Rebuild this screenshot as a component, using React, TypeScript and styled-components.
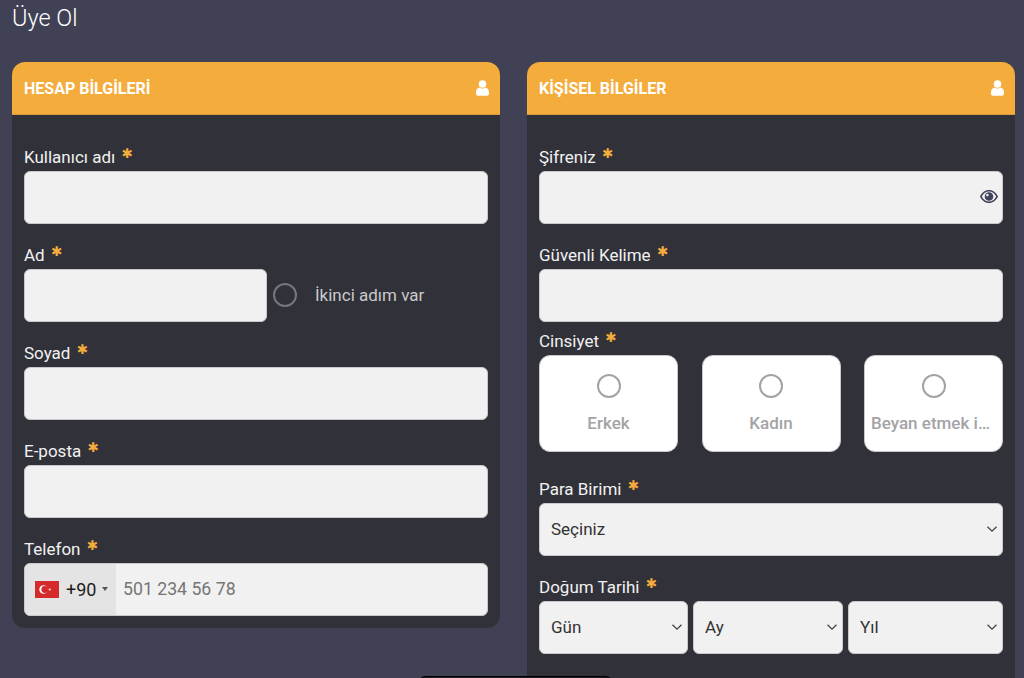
import React from "react";
import styled, { createGlobalStyle } from "styled-components";

const Global = createGlobalStyle`
  html, body { margin: 0; padding: 0; height: 100%; overflow: hidden; background: #404155; }
  * { box-sizing: border-box; }
  body { font-family: Roboto, "Liberation Sans", sans-serif; }
`;

const Page = styled.div`
  width: 1024px;
  height: 678px;
  overflow: hidden;
  position: relative;
  padding: 0 9px 0 12px;
  background: #404155;
`;
const Title = styled.h1`
  margin: 0;
  height: 62px;
  padding-top: 4px;
  font-size: 23.5px;
  line-height: 28px;
  font-weight: 300;
  color: #fff;
`;
const Columns = styled.div`
  display: grid;
  grid-template-columns: 488px 488px;
  column-gap: 27px;
  align-items: start;
`;
const Card = styled.section`
  background: #313139;
  border-radius: 13px;
  overflow: hidden;
`;
const CardHeader = styled.header`
  height: 53px;
  background: #f4ac3c;
  border-bottom: 1px solid #d99a38;
  padding: 0 11px 0 12px;
  display: flex;
  align-items: center;
  justify-content: space-between;
  color: #fff;
  font-size: 16px;
  font-weight: 700;
`;
const CardBody = styled.div<{ $bottom: number }>`
  padding: 30px 12px ${(p) => p.$bottom}px;
`;
const Field = styled.div<{ $gap?: number }>`
  margin-bottom: ${(p) => p.$gap ?? 19}px;
  &:last-child { margin-bottom: 0; }
`;
const Label = styled.label`
  display: block;
  height: 24px;
  margin-bottom: 2px;
  font-size: 17px;
  line-height: 24px;
  color: #f1f1f1;
`;
const Star = styled.span`
  color: #f4ac3c;
  font-size: 13.5px;
  line-height: 12px;
  margin-left: 6px;
  font-family: "DejaVu Sans", sans-serif;
  position: relative;
  top: -5px;
`;
const inputBox = `
  height: 53px;
  background: #f1f1f1;
  border: 1px solid #c9c9cd;
  border-radius: 6px;
`;
const Input = styled.input`
  ${inputBox}
  display: block;
  width: 100%;
  outline: none;
`;
const Row = styled.div`
  display: flex;
  align-items: center;
`;
const ShortInput = styled(Input)`
  width: 243px;
`;
const Check = styled.div`
  display: flex;
  align-items: center;
  margin-left: 6px;
  padding-bottom: 2px;
  font-size: 17px;
  color: #c9c9cb;
`;
const Circle = styled.span<{ $size: number; $color: string }>`
  display: block;
  width: ${(p) => p.$size}px;
  height: ${(p) => p.$size}px;
  border-radius: 50%;
  border: 2.5px solid ${(p) => p.$color};
  flex: none;
`;
const CheckText = styled.span`
  margin-left: 18px;
`;
const Wrap = styled.div`
  position: relative;
`;
const EyeButton = styled.span`
  position: absolute;
  right: 5px;
  top: 19px;
  display: flex;
  color: #40415a;
`;
const Phone = styled.div`
  ${inputBox}
  display: flex;
  overflow: hidden;
`;
const Dial = styled.div`
  width: 91px;
  background: #e4e4e4;
  display: flex;
  align-items: center;
  padding: 0 0 1px 10px;
  font-size: 18px;
  color: #1c1c1c;
`;
const Code = styled.span`
  margin-left: 7px;
`;
const Caret = styled.span`
  margin-left: 6px;
  width: 0;
  height: 0;
  border-left: 3.5px solid transparent;
  border-right: 3.5px solid transparent;
  border-top: 4px solid #555;
`;
const PhoneInput = styled.input`
  flex: 1;
  min-width: 0;
  border: 0;
  background: transparent;
  outline: none;
  padding: 0 7px 2px;
  font: 17.7px Roboto, sans-serif;
  color: #333;
  &::placeholder { color: #757575; opacity: 1; }
`;
const GenderGrid = styled.div`
  display: grid;
  grid-template-columns: repeat(3, 139px);
  justify-content: space-between;
`;
const GenderCard = styled.div`
  height: 97px;
  background: #fff;
  border: 1px solid #c9c9cd;
  border-radius: 11px;
  display: flex;
  flex-direction: column;
  align-items: center;
  padding: 18px 6px 0;
  min-width: 0;
`;
const GenderText = styled.div`
  margin-top: 14px;
  width: 100%;
  text-align: center;
  font-size: 17px;
  line-height: 22px;
  font-weight: 500;
  color: #a3a3a6;
  white-space: nowrap;
  overflow: hidden;
  text-overflow: ellipsis;
`;
const SelectBox = styled.div`
  ${inputBox}
  display: flex;
  align-items: center;
  justify-content: space-between;
  padding: 0 4px 2px 11px;
  font-size: 17px;
  color: #333;
  min-width: 0;
`;
const DateGrid = styled.div`
  display: grid;
  grid-template-columns: 149px 150px 1fr;
  column-gap: 5px;
`;
const Overlay = styled.div`
  position: absolute;
  left: 419px;
  top: 676px;
  width: 193px;
  height: 20px;
  background: #1c1c22;
  border: 1px solid #000;
  border-radius: 6px 6px 0 0;
`;

const UserIcon = () => (
  <svg width="13" height="16" viewBox="0 0 13 16" fill="#fff">
    <circle cx="6.5" cy="4" r="3.8" />
    <path d="M3.4 7.6C1.2 8.3 0 10 0 12.4v1.4C0 15 .9 15.8 2 15.8h9c1.100 0 2-.8 2-2v-1.400c0-2.400-1.200-4.100-3.400-4.800-.9.6-2 1-3.100 1s-2.200-.4-3.100-1z" />
  </svg>
);
const EyeIcon = () => (
  <svg width="18" height="13" viewBox="0 0 18 13" fill="currentColor">
    <path fillRule="evenodd" d="M9 0C5 0 1.900 2.500 0 6.500 1.900 10.500 5 13 9 13s7.100-2.500 9-6.500C16.100 2.500 13 0 9 0zM9 1.500c3 0 5.500 1.800 7.200 5-1.700 3.200-4.200 5-7.200 5s-5.500-1.800-7.200-5c1.700-3.200 4.200-5 7.200-5z" />
    <path fillRule="evenodd" d="M9 2.200a4.300 4.300 0 1 0 0 8.600 4.300 4.300 0 0 0 0-8.600zM7.400 3.800a1.300 1.300 0 1 1 0 2.600 1.300 1.300 0 0 1 0-2.600z" />
  </svg>
);
const Chevron = () => (
  <svg width="12" height="8" viewBox="0 0 12 8" fill="none" stroke="#444" strokeWidth="1.300">
    <path d="M1.500 1.800 6 6.200l4.500-4.400" />
  </svg>
);
const Flag = () => (
  <svg width="24" height="17" viewBox="0 0 24 17">
    <rect width="24" height="17" fill="#d42a2a" />
    <circle cx="8.500" cy="8.500" r="4.200" fill="#fff" />
    <circle cx="9.800" cy="8.500" r="3.400" fill="#d42a2a" />
    <path d="m13.200 8.500 2.900-.9-1.800 2.400V7l1.800 2.400z" fill="#fff" />
  </svg>
);

const Req = ({ children }: { children: React.ReactNode }) => (
  <Label>
    {children}
    <Star>✱</Star>
  </Label>
);

const Select = ({ text }: { text: string }) => (
  <SelectBox>
    <span>{text}</span>
    <Chevron />
  </SelectBox>
);

const Header = ({ title }: { title: string }) => (
  <CardHeader>
    <span>{title}</span>
    <UserIcon />
  </CardHeader>
);

export default function App() {
  return (
    <Page>
      <Global />
      <Title>Üye Ol</Title>
      <Columns>
        <Card>
          <Header title="HESAP BİLGİLERİ" />
          <CardBody $bottom={12}>
            <Field>
              <Req>Kullanıcı adı</Req>
              <Input />
            </Field>
            <Field>
              <Req>Ad</Req>
              <Row>
                <ShortInput />
                <Check>
                  <Circle $size={24} $color="#77777b" />
                  <CheckText>İkinci adım var</CheckText>
                </Check>
              </Row>
            </Field>
            <Field>
              <Req>Soyad</Req>
              <Input />
            </Field>
            <Field>
              <Req>E-posta</Req>
              <Input />
            </Field>
            <Field>
              <Req>Telefon</Req>
              <Phone>
                <Dial>
                  <Flag />
                  <Code>+90</Code>
                  <Caret />
                </Dial>
                <PhoneInput placeholder="501 234 56 78" />
              </Phone>
            </Field>
          </CardBody>
        </Card>
        <Card>
          <Header title="KİŞİSEL BİLGİLER" />
          <CardBody $bottom={40}>
            <Field>
              <Req>Şifreniz</Req>
              <Wrap>
                <Input />
                <EyeButton>
                  <EyeIcon />
                </EyeButton>
              </Wrap>
            </Field>
            <Field $gap={7}>
              <Req>Güvenli Kelime</Req>
              <Input />
            </Field>
            <Field $gap={25}>
              <Req>Cinsiyet</Req>
              <GenderGrid>
                {["Erkek", "Kadın", "Beyan etmek istemiyorum"].map((g) => (
                  <GenderCard key={g}>
                    <Circle $size={24} $color="#a3a3a6" />
                    <GenderText>{g}</GenderText>
                  </GenderCard>
                ))}
              </GenderGrid>
            </Field>
            <Field>
              <Req>Para Birimi</Req>
              <Select text="Seçiniz" />
            </Field>
            <Field>
              <Req>Doğum Tarihi</Req>
              <DateGrid>
                <Select text="Gün" />
                <Select text="Ay" />
                <Select text="Yıl" />
              </DateGrid>
            </Field>
          </CardBody>
        </Card>
      </Columns>
      <Overlay />
    </Page>
  );
}
